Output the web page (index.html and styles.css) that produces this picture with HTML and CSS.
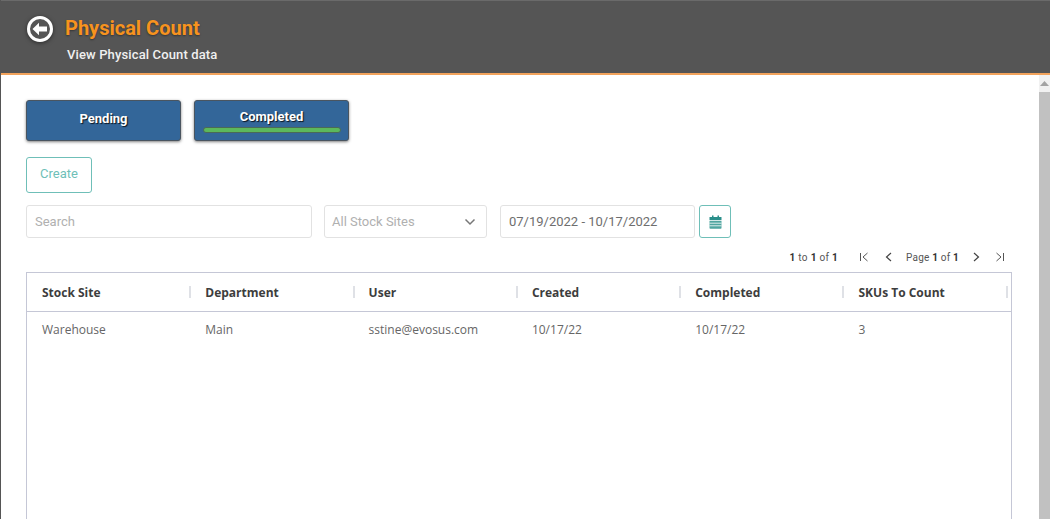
FILE: index.html
```html
<!DOCTYPE html>
<html lang="en">
<head>
<meta charset="utf-8">
<title>Physical Count</title>
<link rel="stylesheet" href="styles.css">
</head>
<body>
<div class="app">
  <header class="header">
    <div class="title-row">
      <svg class="back" width="30" height="30" viewBox="0 0 30 30" aria-hidden="true">
        <circle cx="15" cy="15" r="11.5" fill="#555" stroke="#fff" stroke-width="3"/>
        <path d="M7.5 15 L14 8.8 V12.6 H22 V17.4 H14 V21.2 Z" fill="#fff"/>
      </svg>
      <h1 class="title">Physical Count</h1>
    </div>
    <div class="subtitle">View Physical Count data</div>
  </header>
  <div class="page">
    <main class="content">
      <div class="tabs">
        <button class="tab">Pending</button>
        <button class="tab tab-active"><span class="tab-label">Completed</span><span class="tab-bar"></span></button>
      </div>
      <button class="create">Create</button>
      <div class="filters">
        <div class="field search">Search</div>
        <div class="field select">All Stock Sites
          <svg width="12" height="8" viewBox="0 0 12 8" aria-hidden="true"><path d="M1.5 1.5 L6 6 L10.5 1.5" fill="none" stroke="#777" stroke-width="1.5"/></svg>
        </div>
        <div class="field date">07/19/2022 - 10/17/2022</div>
        <button class="cal" aria-label="Calendar">
          <svg width="13" height="14" viewBox="0 0 13 14" aria-hidden="true">
            <path d="M3 0.5h1.5v2H3zM8.5 0.5H10v2H8.5z" fill="#2a8f8a"/>
            <path d="M0.5 2h12v3h-12z" fill="#2a8f8a"/>
            <path d="M0.5 5.8h12V13a0.8 .8 0 0 1-.8 .8H1.3a.8 .8 0 0 1-.8-.8z" fill="#4fa5a0"/>
            <path d="M0.5 8.2h12M0.5 10.8h12" stroke="#fff" stroke-width=".8"/>
          </svg>
        </button>
      </div>
      <div class="pager">
        <span class="pager-count"><b>1</b> to <b>1</b> of <b>1</b></span>
        <svg class="pg first" width="10" height="10" viewBox="0 0 10 10" aria-hidden="true"><path d="M1.5 1v8M8.5 1 L4 5 L8.5 9" fill="none" stroke="#555" stroke-width="1"/></svg>
        <svg class="pg prev" width="10" height="10" viewBox="0 0 10 10" aria-hidden="true"><path d="M7 1 L2.5 5 L7 9" fill="none" stroke="#444" stroke-width="1.2"/></svg>
        <span class="pager-page">Page <b>1</b> of <b>1</b></span>
        <svg class="pg next" width="10" height="10" viewBox="0 0 10 10" aria-hidden="true"><path d="M3 1 L7.5 5 L3 9" fill="none" stroke="#444" stroke-width="1.2"/></svg>
        <svg class="pg last" width="10" height="10" viewBox="0 0 10 10" aria-hidden="true"><path d="M8.5 1v8M1.5 1 L6 5 L1.5 9" fill="none" stroke="#555" stroke-width="1"/></svg>
      </div>
      <div class="grid">
        <div class="row head">
          <div class="cell">Stock Site</div>
          <div class="cell">Department</div>
          <div class="cell">User</div>
          <div class="cell">Created</div>
          <div class="cell">Completed</div>
          <div class="cell">SKUs To Count</div>
        </div>
        <div class="row body-row">
          <div class="cell">Warehouse</div>
          <div class="cell">Main</div>
          <div class="cell">sstine@evosus.com</div>
          <div class="cell">10/17/22</div>
          <div class="cell">10/17/22</div>
          <div class="cell">3</div>
        </div>
      </div>
    </main>
    <div class="scrollbar">
      <div class="scroll-up"><svg width="9" height="5" viewBox="0 0 9 5" aria-hidden="true"><path d="M0 5 L4.5 0 L9 5 Z" fill="#a3a3a3"/></svg></div>
      <div class="scroll-thumb"></div>
    </div>
  </div>
</div>
</body>
</html>
```
FILE: styles.css
```css
* { box-sizing: border-box; }
html, body { margin: 0; height: 100%; overflow: hidden; }
body { font-family: Roboto, "Liberation Sans", sans-serif; background: #fff; }
.app { height: 519px; display: flex; flex-direction: column; border-left: 1px solid #555; }
.header {
  height: 75px; flex: none; background: #555; border-top: 1px solid #6a6a6a;
  border-bottom: 2px solid #f2a35c; padding: 12px 0 0 24px;
}
.title-row { display: flex; align-items: center; gap: 10px; height: 30px; }
.back { flex: none; margin-top: 2px; filter: drop-shadow(0 1px 2px rgba(0,0,0,.5)); }
.title { margin: 0; font-size: 20px; font-weight: 700; color: #f7931e; letter-spacing: 0; text-shadow: 0 1px 2px rgba(0,0,0,.4); }
.subtitle { margin: 4px 0 0 42px; font-size: 13px; font-weight: 500; color: #f0f0f0; line-height: 15px; letter-spacing: .13px; }
.page { flex: 1; display: flex; min-height: 0; }
.content { flex: 1; min-width: 0; padding: 25px 0 0 25px; display: flex; flex-direction: column; align-items: flex-start; }
.tabs { display: flex; gap: 13px; }
.tab {
  width: 155px; height: 41px; padding: 0 0 4px; border: 1px solid #4a5560; border-radius: 3px;
  background: #336699; color: #fff; font: 700 13px Roboto, sans-serif;
  text-shadow: 1px 1px 1px rgba(0,0,0,.8); box-shadow: 0 1px 3px rgba(0,0,0,.5);
  display: flex; flex-direction: column; align-items: center; justify-content: center;
}
.tab-active { justify-content: flex-start; padding: 8px 0 0; }
.tab-label { line-height: 15px; }
.tab-bar { width: 138px; height: 6px; margin-top: 3px; border-radius: 3px; background: #5cb85c; border: 1px solid #4a6a58; }
.create {
  margin-top: 16px; width: 66px; height: 36px; padding: 0 0 4px; background: #fff;
  border: 1px solid #6fbfb8; border-radius: 3px; color: #6fbfb8; font: 400 13px Roboto, sans-serif;
}
.filters { margin-top: 12px; display: flex; align-items: center; }
.field {
  height: 33px; border: 1px solid #e2e2e2; border-radius: 3px; background: #fff;
  font-size: 13px; color: #b0b0b0; display: flex; align-items: center; padding-left: 8px;
}
.search { width: 286px; }
.select { width: 163px; margin-left: 12px; padding-left: 7px; justify-content: space-between; padding-right: 10px; }
.date { width: 195px; margin-left: 13px; color: #6e6e6e; }
.cal {
  width: 32px; height: 33px; margin-left: 4px; padding: 0; background: #fff; border: 1px solid #6fbfb8;
  border-radius: 3px; display: flex; align-items: center; justify-content: center;
}
.pager {
  width: 986px; height: 34px; padding: 4px 7px 0 0; display: flex; align-items: center; justify-content: flex-end;
  font-size: 10px; color: #555;
}
.pager b { font-weight: 700; color: #333; }
.pager-count { margin-right: 21px; letter-spacing: .3px; }
.pg { flex: none; }
.prev { margin-left: 15px; }
.pager-page { margin: 0 12px; letter-spacing: .2px; }
.last { margin-left: 14px; }
.grid { width: 986px; flex: 1; border: 1px solid #c5c7d6; border-bottom: 0; font-family: "Open Sans", "Noto Sans", sans-serif; font-size: 12px; }
.row { display: grid; grid-template-columns: repeat(6, 163.3px); }
.head { height: 39px; border-bottom: 1px solid #c5c7d6; font-weight: 700; color: #3d3d3d; }
.body-row { height: 34px; color: #666; }
.cell { display: flex; align-items: center; padding-left: 15px; position: relative; }
.head .cell::after { content: ""; position: absolute; right: -1px; top: 13px; width: 2px; height: 12px; background: #dfe1e6; }
.scrollbar { width: 11px; flex: none; background: #f1f1f1; display: flex; flex-direction: column; }
.scroll-up { height: 17px; display: flex; align-items: center; justify-content: center; }
.scroll-thumb { flex: 1; background: #c1c1c1; }
```
